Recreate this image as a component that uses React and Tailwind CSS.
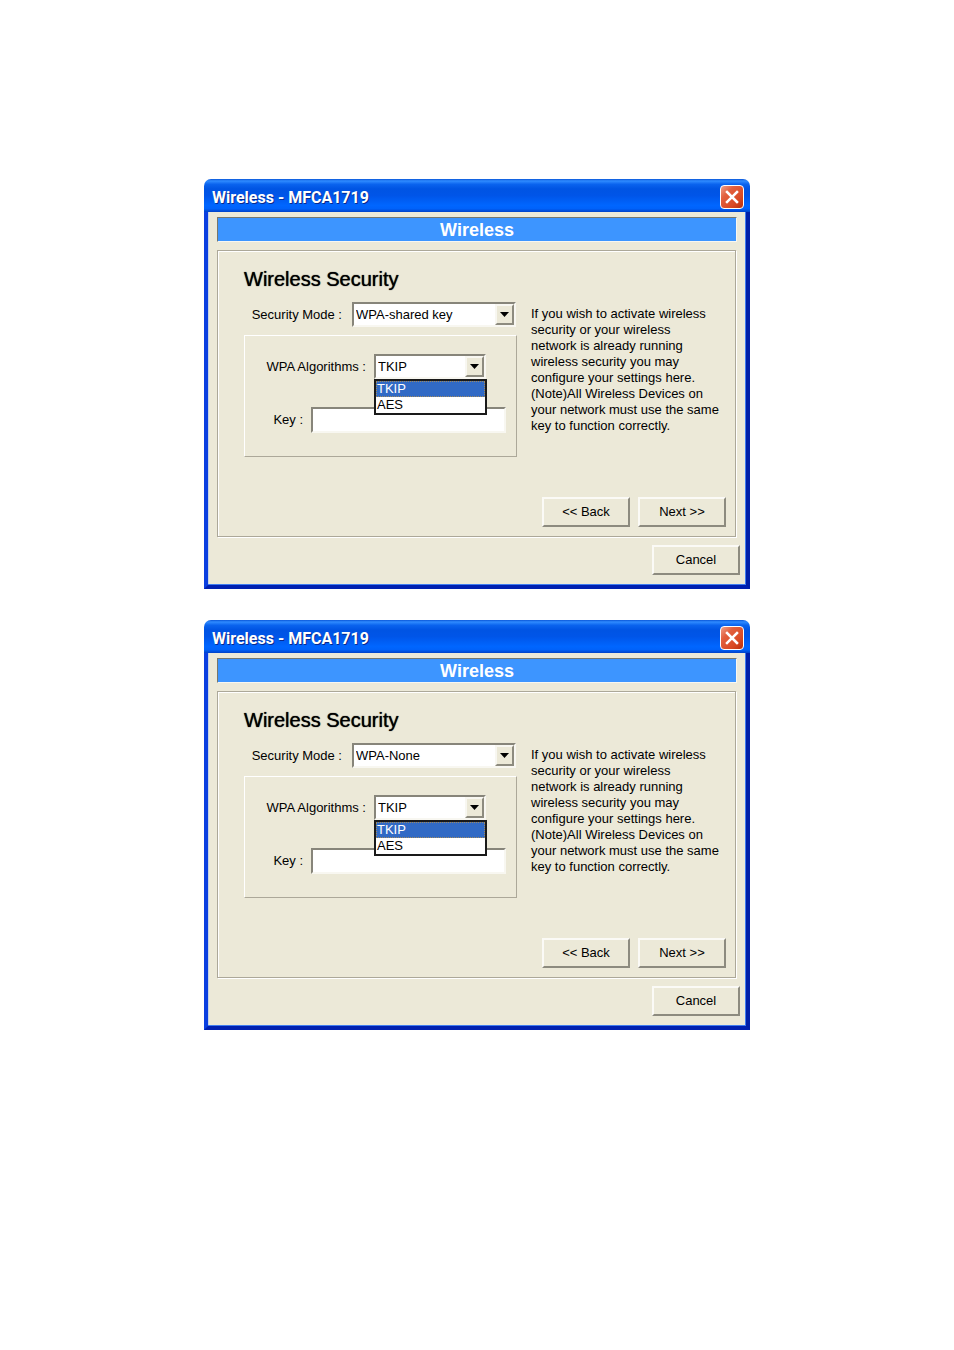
import { useId, useState } from 'react'

const ALGORITHMS = ['TKIP', 'AES']
const MODES = ['WPA-shared key', 'WPA-None']

const HELP_TEXT = `If you wish to activate wireless
security or your wireless
network is already running
wireless security you may
configure your settings here.
(Note)All Wireless Devices on
your network must use the same
key to function correctly.`

const SUNKEN = 'border-2 border-t-[#87857a] border-l-[#87857a] border-b-[#f8f7f1] border-r-[#f8f7f1] bg-white'

function ArrowBox() {
  return (
    <span className="pointer-events-none absolute inset-y-[2px] right-[2px] flex w-[19px] items-center justify-center border-2 border-t-[#f8f7f1] border-l-[#f8f7f1] border-r-[#8d8b7f] border-b-[#8d8b7f] bg-[#ece9d8]">
      <svg width="9" height="5" viewBox="0 0 9 5" aria-hidden="true">
        <path d="M0 0h9L4.5 5z" fill="#000" />
      </svg>
    </span>
  )
}

function PushButton({ children }) {
  return (
    <button
      type="button"
      className="h-[30px] w-[88px] border-2 border-t-[#fbfaf6] border-l-[#fbfaf6] border-r-[#8d8b7f] border-b-[#8d8b7f] bg-[#ece9d8] text-[13px] leading-4"
    >
      {children}
    </button>
  )
}

function TitleBar({ title }) {
  return (
    <header className="flex h-[33px] items-end justify-between rounded-t-[7px] bg-[linear-gradient(180deg,#0a56d8_0%,#2f8bff_6%,#0a63ee_16%,#0054e3_30%,#0055e8_50%,#0066ff_80%,#0062fa_90%,#0042c8_100%)] pr-1.5 pb-[3px] pl-2">
      <h1 className="font-[Roboto,'Open_Sans',sans-serif] text-base leading-[22px] font-bold text-white [text-shadow:1px_1px_0_#0a2a8c]">
        {title}
      </h1>
      <button
        type="button"
        aria-label="Close"
        className="flex size-6 items-center justify-center rounded-[4px] border border-white bg-[linear-gradient(135deg,#f0a08a_0%,#e2603e_30%,#da4a24_70%,#b8300c_100%)]"
      >
        <svg width="14" height="14" viewBox="0 0 14 14" aria-hidden="true">
          <path d="M2 2l10 10M12 2L2 12" stroke="#fff" strokeWidth="2.5" strokeLinecap="square" />
        </svg>
      </button>
    </header>
  )
}

function AlgorithmPicker({ id }) {
  const [value, setValue] = useState('TKIP')
  const [open, setOpen] = useState(true)

  return (
    <div className="relative w-28">
      <select
        id={id}
        value={value}
        onChange={e => setValue(e.target.value)}
        onMouseDown={e => {
          e.preventDefault()
          setOpen(!open)
        }}
        className={`h-[25px] w-full appearance-none pl-0.5 ${SUNKEN}`}
      >
        {ALGORITHMS.map(a => <option key={a}>{a}</option>)}
      </select>
      <ArrowBox />
      {open && (
        <ul
          role="listbox"
          aria-label="WPA Algorithms"
          className="absolute top-full left-0 z-10 w-[113px] border-2 border-[#1a1a1a] bg-white"
        >
          {ALGORITHMS.map(a => (
            <li
              key={a}
              role="option"
              aria-selected={a === value}
              onClick={() => {
                setValue(a)
                setOpen(false)
              }}
              className={`h-4 pl-px leading-4 ${a === value ? 'bg-[#316ac5] text-white outline-1 -outline-offset-1 outline-dotted outline-[#a08a60]' : ''}`}
            >
              {a}
            </li>
          ))}
        </ul>
      )}
    </div>
  )
}

function WirelessDialog({ initialMode }) {
  const id = useId()
  const [mode, setMode] = useState(initialMode)

  return (
    <section className="w-full max-w-[546px]">
      <TitleBar title="Wireless - MFCA1719" />

      <div className="border-x-4 border-b-4 border-l-[#0a3fe0] border-r-[#001fa8] border-b-[#0020b0] bg-[#ece9d8] shadow-[inset_-1px_-1px_0_#3f7cf0,inset_1px_0_0_#c5d3e6] text-[13px] leading-4 text-black">
        <div className="px-[9px] pt-[5px]">
          <h2 className="h-[25px] border border-t-[#77776c] border-l-[#77776c] border-r-[#f8f7f1] border-b-[#f8f7f1] bg-[#3d95ff] text-center text-lg leading-6 font-bold text-white">
            Wireless
          </h2>

          {/* Etched main panel */}
          <div className="mt-2 mr-px border border-[#aca899] pt-3.5 pr-[9px] pb-[9px] pl-[26px] shadow-[1px_1px_0_#fff,inset_1px_1px_0_#fff]">
            <h3 className="text-xl leading-7 [text-shadow:0_0_1px_#000]">Wireless Security</h3>

            <div className="mt-[9px] flex gap-3.5">
              <div className="w-[273px] shrink-0">
                <div className="flex items-center justify-end gap-2.5 pr-px">
                  <label htmlFor={`${id}-mode`}>Security Mode :</label>
                  <div className="relative w-[164px]">
                    <select
                      id={`${id}-mode`}
                      value={mode}
                      onChange={e => setMode(e.target.value)}
                      className={`h-[25px] w-full appearance-none pl-0.5 ${SUNKEN}`}
                    >
                      {MODES.map(m => <option key={m}>{m}</option>)}
                    </select>
                    <ArrowBox />
                  </div>
                </div>

                <div className="mt-2 border border-t-white border-l-white border-r-[#aca899] border-b-[#aca899] pt-[18px] pb-[23px]">
                  <div className="flex items-center justify-end gap-2 pr-[30px]">
                    <label htmlFor={`${id}-algo`}>WPA Algorithms :</label>
                    <AlgorithmPicker id={`${id}-algo`} />
                  </div>
                  <div className="mt-7 flex items-center justify-end gap-2 pr-[10px]">
                    <label htmlFor={`${id}-key`}>Key :</label>
                    <input id={`${id}-key`} type="text" className={`h-[26px] w-[195px] px-1 ${SUNKEN}`} />
                  </div>
                </div>
              </div>

              <p className="mt-1 whitespace-pre-line">{HELP_TEXT}</p>
            </div>

            <div className="mt-10 flex justify-end gap-2">
              <PushButton>&lt;&lt; Back</PushButton>
              <PushButton>Next &gt;&gt;</PushButton>
            </div>
          </div>
        </div>

        <div className="flex justify-end px-1.5 pt-2 pb-2.5">
          <PushButton>Cancel</PushButton>
        </div>
      </div>
    </section>
  )
}

export default function App() {
  return (
    <main className="flex min-h-screen flex-col items-center gap-[31px] bg-white pt-[179px] font-['Liberation_Sans',Arial,sans-serif]">
      <WirelessDialog initialMode="WPA-shared key" />
      <WirelessDialog initialMode="WPA-None" />
    </main>
  )
}
